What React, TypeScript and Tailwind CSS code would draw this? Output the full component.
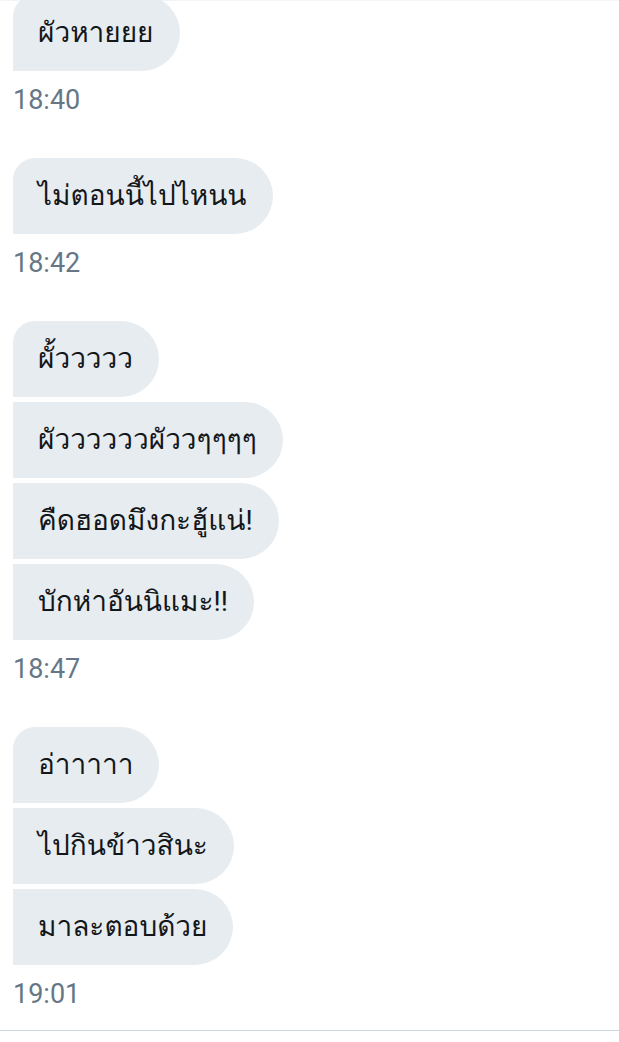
import React from "react";

type Group = { msgs: string[]; time: string };

const groups: Group[] = [
  { msgs: ["ผัวหายยย"], time: "18:40" },
  { msgs: ["ไม่ตอนนี้ไปไหนน"], time: "18:42" },
  {
    msgs: ["ผั้ววววว", "ผัววววววผัววๆๆๆๆ", "คืดฮอดมึงกะฮู้แน่!", "บักห่าอันนิแมะ!!"],
    time: "18:47",
  },
  { msgs: ["อ่าาาาา", "ไปกินข้าวสินะ", "มาละตอบด้วย"], time: "19:01" },
];

export default function App() {
  return (
    <div className="relative h-[1042px] w-full overflow-hidden bg-white font-[family-name:Roboto,Loma,sans-serif]">
      <div className="h-px w-full bg-[#f2f5f7]" />
      <div className="mt-[-6px] flex flex-col gap-[42px] pl-[13px]">
        {groups.map((g, gi) => (
          <div key={gi} className="flex flex-col">
            <div className="flex flex-col items-start gap-[5px]">
              {g.msgs.map((m, mi) => (
                <div
                  key={mi}
                  className={
                    mi === 0
                      ? "flex h-[76px] items-center rounded-r-[38px] rounded-tl-[22px] bg-[#e6ecf0] pl-[25px] pr-[26px] text-[28px] text-[#14171a]"
                      : "flex h-[76px] items-center rounded-r-[38px] bg-[#e6ecf0] pl-[25px] pr-[26px] text-[28px] text-[#14171a]"
                  }
                >
                  {m}
                </div>
              ))}
            </div>
            <div className="mt-[13px] text-[27px] leading-[32px] text-[#657786]">{g.time}</div>
          </div>
        ))}
      </div>
      <div className="absolute left-0 right-0 top-[1030px] h-px bg-[#ccd6dd]" />
    </div>
  );
}
